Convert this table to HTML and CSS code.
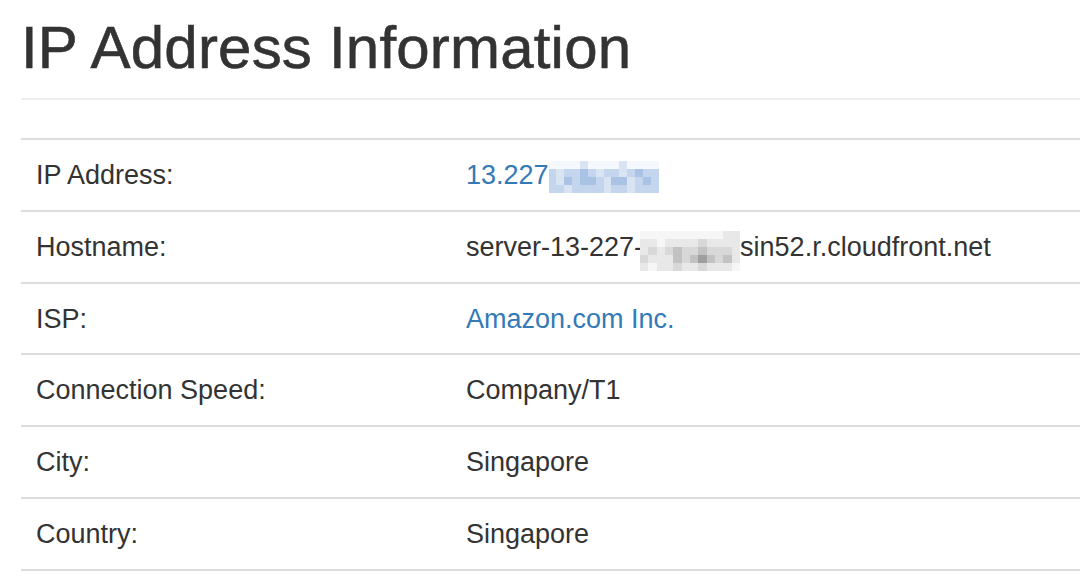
FILE: index.html
```html
<!DOCTYPE html>
<html lang="en">
<head>
<meta charset="utf-8">
<title>IP Address Information</title>
<link rel="stylesheet" href="styles.css">
</head>
<body>
<div class="container">
  <h1 class="page-header">IP Address Information</h1>
  <table class="info">
    <tbody>
      <tr>
        <td class="label">IP Address:</td>
        <td><a href="#" class="link">13.227</a><span class="mosaic ip"><span class="cells"><i class="b0"></i><i class="b0"></i><i class="b0"></i><i class="b0"></i><i class="b1"></i><i class="b0"></i><i class="b0"></i><i class="b0"></i><i class="b0"></i><i class="b1"></i><i class="b0"></i><i class="b0"></i><i class="b0"></i><i class="b0"></i><i class="b2"></i><i class="b1"></i><i class="b2"></i><i class="b2"></i><i class="b3"></i><i class="b2"></i><i class="b1"></i><i class="b2"></i><i class="b2"></i><i class="b1"></i><i class="b2"></i><i class="b3"></i><i class="b2"></i><i class="b2"></i><i class="b2"></i><i class="b1"></i><i class="b3"></i><i class="b2"></i><i class="b3"></i><i class="b3"></i><i class="b2"></i><i class="b1"></i><i class="b3"></i><i class="b3"></i><i class="b1"></i><i class="b2"></i><i class="b3"></i><i class="b2"></i><i class="b2"></i><i class="b2"></i><i class="b1"></i><i class="b2"></i><i class="b2"></i><i class="b2"></i><i class="b2"></i><i class="b1"></i><i class="b2"></i><i class="b2"></i><i class="b1"></i><i class="b2"></i><i class="b2"></i><i class="b2"></i></span></span></td>
      </tr>
      <tr>
        <td class="label">Hostname:</td>
        <td>server-13-227-<span class="mosaic host"><span class="cells"><i class="g0"></i><i class="g0"></i><i class="g0"></i><i class="g0"></i><i class="g0"></i><i class="g0"></i><i class="g0"></i><i class="g0"></i><i class="g0"></i><i class="g0"></i><i class="g1"></i><i class="g1"></i><i class="g1"></i><i class="g1"></i><i class="g0"></i><i class="g1"></i><i class="g1"></i><i class="g1"></i><i class="g1"></i><i class="g2"></i><i class="g1"></i><i class="g1"></i><i class="g1"></i><i class="g1"></i><i class="g1"></i><i class="g2"></i><i class="g1"></i><i class="g2"></i><i class="g3"></i><i class="g2"></i><i class="g2"></i><i class="g3"></i><i class="g2"></i><i class="g2"></i><i class="g2"></i><i class="g1"></i><i class="g2"></i><i class="g1"></i><i class="g1"></i><i class="g1"></i><i class="g3"></i><i class="g2"></i><i class="g3"></i><i class="g4"></i><i class="g3"></i><i class="g2"></i><i class="g3"></i><i class="g1"></i><i class="g1"></i><i class="g0"></i><i class="g1"></i><i class="g1"></i><i class="g2"></i><i class="g1"></i><i class="g1"></i><i class="g2"></i><i class="g1"></i><i class="g1"></i><i class="g1"></i><i class="g0"></i></span></span>sin52.r.cloudfront.net</td>
      </tr>
      <tr>
        <td class="label">ISP:</td>
        <td><a href="#" class="link">Amazon.com Inc.</a></td>
      </tr>
      <tr>
        <td class="label">Connection Speed:</td>
        <td>Company/T1</td>
      </tr>
      <tr>
        <td class="label">City:</td>
        <td>Singapore</td>
      </tr>
      <tr>
        <td class="label">Country:</td>
        <td>Singapore</td>
      </tr>
    </tbody>
  </table>
</div>
</body>
</html>
```

FILE: styles.css
```css
html, body {
  margin: 0;
  padding: 0;
  background: #ffffff;
}

body {
  font-family: "Liberation Sans", Arial, Helvetica, sans-serif;
  color: #333333;
  font-size: 27px;
  overflow: hidden;
}

.container {
  padding-left: 21px;
}

.page-header {
  margin: 0;
  padding: 15px 0 17px 0;
  font-size: 60px;
  font-weight: 400;
  line-height: 66px;
  letter-spacing: 0.2px;
  color: #333333;
  -webkit-text-stroke: 0.6px #333333;
  border-bottom: 2px solid #eeeeee;
  white-space: nowrap;
}

.info {
  margin-top: 38px;
  width: calc(100% + 40px);
  border-collapse: separate;
  border-spacing: 0;
  border-bottom: 2px solid #dddddd;
}

.info td {
  border-top: 2px solid #dddddd;
  padding: 16px 15px 14px 15px;
  line-height: 39.83px;
  height: 39.83px;
  vertical-align: top;
  white-space: nowrap;
  text-align: left;
}

.info td.label {
  width: 400px;
}

.link {
  color: #337ab7;
  text-decoration: none;
}

.mosaic {
  display: inline-block;
  vertical-align: baseline;
  overflow: hidden;
  line-height: 0;
}

.cells {
  display: grid;
  width: 100%;
  height: 100%;
}

.cells i {
  display: block;
}

.mosaic.ip {
  width: 110px;
  height: 32px;
  margin-bottom: -9px;
}

.mosaic.ip .cells {
  grid-template-columns: repeat(14, 1fr);
  grid-template-rows: repeat(4, 1fr);
}

.mosaic.host {
  width: 100px;
  height: 40px;
  margin-left: -3px;
  margin-bottom: -15px;
}

.mosaic.host .cells {
  grid-template-columns: repeat(12, 1fr);
  grid-template-rows: repeat(5, 1fr);
}

.b0 { background: #f5f8fc; }
.b1 { background: #d9e4f2; }
.b2 { background: #c4d6ed; }
.b3 { background: #a9c3e5; }

.g0 { background: #f6f6f6; }
.g1 { background: #e8e8e8; }
.g2 { background: #d8d8d8; }
.g3 { background: #c2c2c2; }
.g4 { background: #9e9e9e; }
```
